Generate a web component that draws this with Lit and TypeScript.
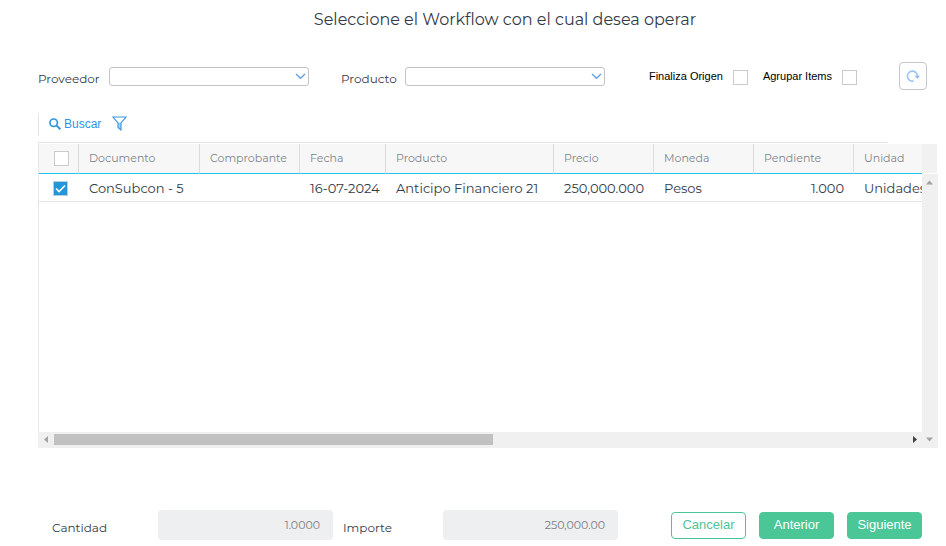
import { LitElement, html, css } from "lit";
import { customElement, property, state } from "lit/decorators.js";

interface Column {
  key: string;
  title: string;
  size: string;
  numeric?: boolean;
}

const COLUMNS: Column[] = [
  { key: "documento", title: "Documento", size: "w-doc" },
  { key: "comprobante", title: "Comprobante", size: "w-std" },
  { key: "fecha", title: "Fecha", size: "w-date" },
  { key: "producto", title: "Producto", size: "w-prod" },
  { key: "precio", title: "Precio", size: "w-std", numeric: true },
  { key: "moneda", title: "Moneda", size: "w-std" },
  { key: "pendiente", title: "Pendiente", size: "w-std", numeric: true },
  { key: "unidad", title: "Unidad", size: "w-std" },
];

const ROWS: Record<string, string>[] = [
  {
    documento: "ConSubcon - 5",
    comprobante: "",
    fecha: "16-07-2024",
    producto: "Anticipo Financiero 21",
    precio: "250,000.000",
    moneda: "Pesos",
    pendiente: "1.000",
    unidad: "Unidades",
  },
];

const checkbox = css`
  input[type="checkbox"] {
    appearance: none;
    display: block;
    box-sizing: border-box;
    width: 15px;
    height: 15px;
    margin: 0;
    border: 1px solid #c9cbce;
    background: #fff;
    flex: none;
  }
  input[type="checkbox"]:checked {
    border-color: #b9cfdd;
    background: #2196d8
      url("data:image/svg+xml,%3Csvg xmlns='http://www.w3.org/2000/svg' viewBox='0 0 13 13'%3E%3Cpath d='M2 6.5 5 9.5 11 3.5' fill='none' stroke='white' stroke-width='1.7'/%3E%3C/svg%3E")
      center / 13px 13px no-repeat;
  }
`;

@customElement("combo-field")
class ComboField extends LitElement {
  @property() label = "";

  static styles = css`
    :host {
      display: flex;
      align-items: center;
    }
    label {
      flex: 1;
      padding-top: 6px;
      font-size: 12px;
      line-height: 16px;
      color: #333a47;
    }
    .box {
      position: relative;
      width: 200px;
    }
    select {
      appearance: none;
      display: block;
      box-sizing: border-box;
      width: 100%;
      height: 19px;
      margin: 0;
      border: 1px solid #c3c4c6;
      border-radius: 3px;
      background: #fff;
      font: inherit;
    }
    svg {
      position: absolute;
      right: 3px;
      top: 6px;
      width: 11px;
      height: 7px;
      pointer-events: none;
    }
  `;

  render() {
    return html`
      <label for="combo">${this.label}</label>
      <span class="box">
        <select id="combo"><option></option></select>
        <svg viewBox="0 0 11 7" aria-hidden="true">
          <path d="M1 1 5.5 5.2 10 1" fill="none" stroke="#5fa0de" stroke-width="1.4" />
        </svg>
      </span>
    `;
  }
}

@customElement("workflow-grid")
class WorkflowGrid extends LitElement {
  @state() private selected = new Set<number>([0]);

  static styles = [
    checkbox,
    css`
      :host {
        display: grid;
        grid-template-columns: minmax(0, 1fr) 16px;
        grid-template-rows: 32px 258px 16px;
      }
      .view {
        grid-column: 1;
        grid-row: 1 / 3;
        overflow: hidden;
        border-left: 1px solid #e6e6e6;
      }
      .top {
        grid-column: 1 / 3;
        grid-row: 1;
        height: 1px;
        margin-right: 50px;
        background: #e4e4e4;
      }
      table {
        width: 915px;
        margin-top: 2px;
        table-layout: fixed;
        border-collapse: separate;
        border-spacing: 0;
      }
      .w-check { width: 40px; }
      .w-doc { width: 121px; }
      .w-std { width: 100px; }
      .w-date { width: 86px; }
      .w-prod { width: 168px; }
      th {
        box-sizing: border-box;
        height: 30px;
        padding: 0 10px 1px;
        border-right: 1px solid #dcdcdc;
        border-bottom: 1px solid #1fc3ee;
        background: #f7f7f7;
        font-size: 11px;
        font-weight: 400;
        text-align: left;
        white-space: nowrap;
        color: #80848b;
      }
      td {
        box-sizing: border-box;
        height: 28px;
        padding: 0 0 0 10px;
        border-bottom: 1px solid #e6e6e6;
        font-size: 13px;
        white-space: nowrap;
        color: #333a47;
      }
      th.pick { padding: 0 9px 0 15px; }
      td.pick { padding: 2px 11px 0 14px; }
      td.num {
        padding-right: 10px;
        text-align: right;
      }
      .corner {
        grid-column: 2;
        grid-row: 1;
        margin: 2px 1px 1px 0;
        background: #f1f1f1;
      }
      .bar {
        display: flex;
        justify-content: space-between;
        align-items: center;
        background: #f0f0f0;
      }
      .vertical {
        grid-column: 2;
        grid-row: 2 / 4;
        flex-direction: column;
        padding: 5px 1px 5px 0;
      }
      .horizontal {
        grid-column: 1;
        grid-row: 3;
        padding: 0 4px 1px 5px;
      }
      .track {
        flex: 1;
        margin: 0 12px 0 4px;
      }
      .thumb {
        width: 52%;
        height: 11px;
        background: #c1c1c1;
      }
      .bar svg {
        display: block;
        flex: none;
        width: 7px;
        height: 7px;
        fill: #a3a3a3;
      }
      .bar svg.on { fill: #404040; }
    `,
  ];

  private toggle(i: number) {
    const next = new Set(this.selected);
    next.has(i) ? next.delete(i) : next.add(i);
    this.selected = next;
  }

  render() {
    return html`
      <div class="view">
        <table>
          <colgroup>
            <col class="w-check" />
            ${COLUMNS.map((c) => html`<col class=${c.size} />`)}
          </colgroup>
          <thead>
            <tr>
              <th class="pick"><input type="checkbox" aria-label="Seleccionar todo" /></th>
              ${COLUMNS.map((c) => html`<th scope="col">${c.title}</th>`)}
            </tr>
          </thead>
          <tbody>
            ${ROWS.map(
              (row, i) => html`<tr>
                <td class="pick">
                  <input
                    type="checkbox"
                    aria-label=${row.documento}
                    .checked=${this.selected.has(i)}
                    @change=${() => this.toggle(i)}
                  />
                </td>
                ${COLUMNS.map((c) => html`<td class=${c.numeric ? "num" : ""}>${row[c.key]}</td>`)}
              </tr>`
            )}
          </tbody>
        </table>
      </div>
      <div class="top"></div>
      <div class="corner"></div>
      <div class="bar vertical">
        <svg viewBox="0 0 7 7"><path d="M0 5.5 3.5 1.5 7 5.5Z" /></svg>
        <svg viewBox="0 0 7 7"><path d="M0 1.5 3.5 5.5 7 1.5Z" /></svg>
      </div>
      <div class="bar horizontal">
        <svg viewBox="0 0 7 7"><path d="M5 0 1 3.5 5 7Z" /></svg>
        <div class="track"><div class="thumb"></div></div>
        <svg class="on" viewBox="0 0 7 7"><path d="M2 0 6 3.5 2 7Z" /></svg>
      </div>
    `;
  }
}

@customElement("app-root")
class AppRoot extends LitElement {
  static styles = [
    checkbox,
    css`
      :host {
        display: block;
        padding: 9px 8px 0 38px;
        background: #fff;
        font-family: Montserrat, Inter, "Noto Sans", sans-serif;
        color: #333a47;
      }
      h1 {
        margin: 0 -8px 0 0;
        padding-left: 26px;
        font-size: 16px;
        font-weight: 400;
        line-height: 22px;
        text-align: center;
      }
      .filters {
        display: flex;
        align-items: center;
        height: 28px;
        margin-top: 31px;
        padding-right: 11px;
      }
      .provider { width: 271px; }
      .product { width: 264px; margin-left: 32px; }
      .options {
        display: flex;
        gap: 15px;
        margin-left: auto;
        padding-top: 2px;
      }
      .option {
        display: flex;
        gap: 10px;
        font: 11px/14px "Liberation Sans", Arial, sans-serif;
        color: #000;
      }
      .option input { margin-top: 1px; }
      .refresh {
        display: flex;
        align-items: center;
        justify-content: center;
        box-sizing: border-box;
        width: 28px;
        height: 28px;
        margin: 0 0 0 42px;
        padding: 0;
        border: 1px solid #c6c7c9;
        border-radius: 4px;
        background: #fff;
      }
      .refresh svg { width: 14px; height: 14px; }
      .toolbar {
        display: flex;
        align-items: center;
        gap: 11px;
        box-sizing: border-box;
        height: 23px;
        margin: 23px 0 6px;
        padding: 0 0 2px 10px;
        border-left: 1px solid #e4e4e4;
      }
      .tool {
        display: flex;
        align-items: center;
        gap: 3px;
        padding: 0;
        border: 0;
        background: none;
        font: 12px/16px "Liberation Sans", Arial, sans-serif;
        color: #2f96e6;
      }
      .tool svg { display: block; }
      .footer {
        display: flex;
        align-items: center;
        margin-top: 62px;
        padding: 0 16px 0 14px;
      }
      .total {
        display: flex;
        align-items: center;
      }
      .total label {
        padding-top: 5px;
        font-size: 12px;
        line-height: 16px;
      }
      .quantity label { width: 106px; }
      .amount { margin-left: 10px; }
      .amount label { width: 100px; }
      .total input {
        box-sizing: border-box;
        width: 175px;
        height: 30px;
        padding: 0 13px;
        border: 0;
        border-radius: 4px;
        background: #eeeff1;
        font: inherit;
        font-size: 11px;
        text-align: right;
        color: #7a7c80;
      }
      .actions {
        display: flex;
        gap: 13px;
        margin-left: auto;
      }
      .action {
        width: 75px;
        height: 27px;
        margin-top: 1px;
        padding: 0 0 2px;
        border: 1px solid #4bc696;
        border-radius: 4px;
        background: #4bc696;
        font: 13px/16px "Liberation Sans", Arial, sans-serif;
        color: #fff;
      }
      .action.plain {
        background: #fff;
        color: #4bc696;
      }
    `,
  ];

  render() {
    return html`
      <h1>Seleccione el Workflow con el cual desea operar</h1>

      <div class="filters">
        <combo-field class="provider" label="Proveedor"></combo-field>
        <combo-field class="product" label="Producto"></combo-field>
        <div class="options">
          <label class="option">Finaliza Origen <input type="checkbox" /></label>
          <label class="option">Agrupar Items <input type="checkbox" /></label>
        </div>
        <button class="refresh" aria-label="Actualizar">
          <svg viewBox="0 0 14 14">
            <path d="M7.6 12A5 5 0 1 1 11.4 7" fill="none" stroke="#9cc4f8" stroke-width="1.6" />
            <path d="M8.6 6.8H14L11.3 9.8Z" fill="#8ab8f5" />
          </svg>
        </button>
      </div>

      <div class="toolbar">
        <button class="tool">
          <svg width="12" height="12" viewBox="0 0 12 12">
            <circle cx="4.7" cy="4.7" r="3.7" fill="none" stroke="#2f96e6" stroke-width="1.7" />
            <path d="M7.4 7.4 11.3 11.3" stroke="#2f96e6" stroke-width="2" />
          </svg>
          Buscar
        </button>
        <button class="tool" aria-label="Filtrar">
          <svg width="15" height="15" viewBox="0 0 15 15">
            <path d="M6 6.5H9V13.5L6 11.2Z" fill="#a9d0f3" />
            <path d="M1 1H14L9 7V14L6 11.5V7Z" fill="none" stroke="#3b94dd" stroke-width="1.1" />
          </svg>
        </button>
      </div>

      <workflow-grid></workflow-grid>

      <div class="footer">
        <div class="total quantity">
          <label for="cantidad">Cantidad</label>
          <input id="cantidad" readonly value="1.0000" />
        </div>
        <div class="total amount">
          <label for="importe">Importe</label>
          <input id="importe" readonly value="250,000.00" />
        </div>
        <div class="actions">
          <button class="action plain">Cancelar</button>
          <button class="action">Anterior</button>
          <button class="action">Siguiente</button>
        </div>
      </div>
    `;
  }
}
